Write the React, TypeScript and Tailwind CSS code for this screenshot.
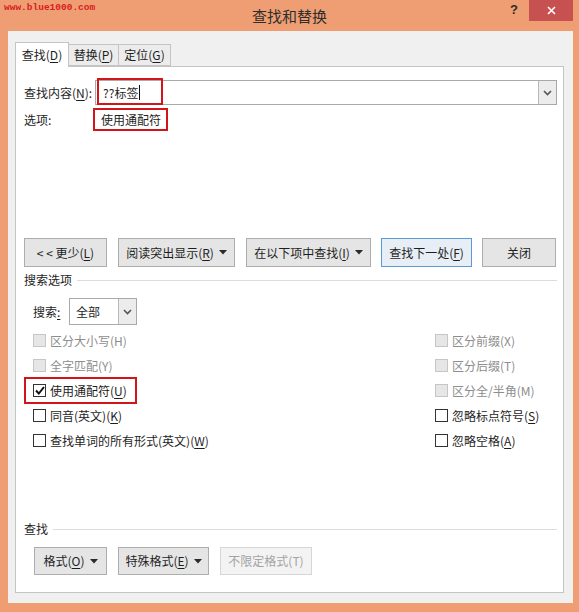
import React from "react";

const U = ({ c }: { c: string }) => (
  <span className="underline decoration-[1px] underline-offset-[2px]">{c}</span>
);

const Caret = () => (
  <svg width="8" height="5" viewBox="0 0 8 5" className="ml-[5px] shrink-0">
    <path d="M0 0 L8 0 L4 4.5 Z" fill="#2a2a2a" />
  </svg>
);

const Chevron = () => (
  <svg width="9" height="6" viewBox="0 0 9 6">
    <path d="M1 1 L4.5 4.5 L8 1" fill="none" stroke="#555" strokeWidth="1.6" />
  </svg>
);

const Btn = ({
  w,
  children,
  focused = false,
  disabled = false,
  h = "h-[29px]",
}: {
  w: string;
  children: React.ReactNode;
  focused?: boolean;
  disabled?: boolean;
  h?: string;
}) => (
  <div
    className={`${w} ${h} flex shrink-0 items-center justify-center border text-[12px] ${
      focused
        ? "border-[#5b9bd5] bg-[#e8eef5] text-[#1e1e1e]"
        : disabled
          ? "border-[#d6d6d6] bg-[#f3f3f3] text-[#a3a3a3]"
          : "border-[#adadad] bg-[#e5e5e5] text-[#1e1e1e]"
    }`}
  >
    {children}
  </div>
);

const Check = ({
  label,
  acc,
  disabled = false,
  checked = false,
}: {
  label: string;
  acc: string;
  disabled?: boolean;
  checked?: boolean;
}) => (
  <div className="flex h-[25px] items-center">
    <div
      className={`flex h-[13px] w-[13px] items-center justify-center border ${
        disabled ? "border-[#c6c6c6] bg-[#e6e6e6]" : "border-[#333] bg-white"
      }`}
    >
      {checked && (
        <svg width="10" height="9" viewBox="0 0 10 9">
          <path d="M1 4.5 L3.8 7.5 L9 1" fill="none" stroke="#111" strokeWidth="2" />
        </svg>
      )}
    </div>
    <span
      className={`ml-[4px] whitespace-nowrap text-[12px] ${
        disabled ? "text-[#8d8d8d]" : "text-[#1e1e1e]"
      }`}
    >
      {label}(
      {disabled ? acc : <U c={acc} />})
    </span>
  </div>
);

const Group = ({ title }: { title: string }) => (
  <div className="flex h-[16px] items-center">
    <span className="whitespace-nowrap text-[12px] text-[#1e1e1e]">{title}</span>
    <div className="ml-[5px] h-px flex-1 bg-[#dcdcdc]" />
  </div>
);

export default function App() {
  return (
    <div className="flex h-[612px] w-[579px] flex-col overflow-hidden bg-[#ef9e73] font-['Noto_Sans_CJK_SC',sans-serif] leading-[16px]">
      {/* title bar */}
      <div className="flex h-[31px] shrink-0 items-start">
        <div className="w-[100px] pl-[4px] pt-[2px] font-['Liberation_Mono',monospace] text-[9.5px] font-bold leading-[12px] text-[#d82020]">
          www.blue1000.com
        </div>
        <div className="flex-1 pt-[6px] text-center text-[15px] leading-[20px] text-[#2e2e2e]">
          查找和替换
        </div>
        <div className="flex w-[100px] items-start justify-end pr-[6px]">
          <span className="mr-[11px] pt-[2px] font-['Liberation_Sans',sans-serif] text-[13px] font-bold leading-[16px] text-[#2e2e2e]">
            ?
          </span>
          <div className="flex h-[21px] w-[44px] items-center justify-center bg-[#c75050]">
            <svg width="9" height="9" viewBox="0 0 9 9">
              <path d="M1 1 L8 8 M8 1 L1 8" stroke="#fff" strokeWidth="1.6" />
            </svg>
          </div>
        </div>
      </div>

      {/* dialog body */}
      <div className="mb-[9px] ml-[8px] mr-[6px] flex flex-1 flex-col bg-[#f0f0f0] pb-[10px] pl-[7px] pr-[9px] pt-[11px]">
        {/* tabs */}
        <div className="flex h-[24px] shrink-0 items-start text-[12px] text-[#1e1e1e]">
          <div className="relative z-10 flex h-[25px] w-[54px] items-center justify-center border border-b-0 border-[#c4c4c4] bg-white">
            查找(<U c="D" />)
          </div>
          <div className="mt-[2px] flex h-[22px] w-[50px] items-center justify-center border border-l-0 border-[#c4c4c4] bg-[#ececec]">
            替换(<U c="P" />)
          </div>
          <div className="mt-[2px] flex h-[22px] w-[52px] items-center justify-center border border-l-0 border-[#c4c4c4] bg-[#ececec]">
            定位(<U c="G" />)
          </div>
        </div>

        {/* panel */}
        <div className="flex h-[527px] flex-col border border-[#c4c4c4] bg-white pl-[8px] pr-[6px] pt-[13px] text-[12px] text-[#1e1e1e]">
          {/* find what */}
          <div className="flex h-[25px] items-center">
            <span className="w-[71px] whitespace-nowrap">
              查找内容(<U c="N" />):
            </span>
            <div className="relative flex h-[25px] flex-1 items-center border border-[#a9a9a9] bg-white">
              <span className="pl-[7px]">??标签</span>
              <span className="ml-px h-[15px] w-px bg-[#111]" />
              <div className="ml-auto flex h-full w-[18px] items-center justify-center border-l border-[#b9b9b9] bg-[#ececec]">
                <Chevron />
              </div>
              <div className="absolute left-[1px] top-[-3px] h-[27px] w-[66px] border-2 border-[#d0161b]" />
            </div>
          </div>

          {/* options */}
          <div className="relative mt-[3px] flex h-[23px] items-center">
            <span className="w-[77px]">选项:</span>
            <span>使用通配符</span>
            <div className="absolute left-[69px] top-0 h-[23px] w-[75px] border-2 border-[#d0161b]" />
          </div>

          {/* buttons */}
          <div className="mt-[107px] flex items-center">
            <Btn w="w-[83px]">
              &lt; &lt; 更少(<U c="L" />)
            </Btn>
            <div className="ml-[11px]">
              <Btn w="w-[117px]">
                阅读突出显示(<U c="R" />)
                <Caret />
              </Btn>
            </div>
            <div className="ml-[11px]">
              <Btn w="w-[125px]">
                在以下项中查找(<U c="I" />)
                <Caret />
              </Btn>
            </div>
            <div className="ml-[10px]">
              <Btn w="w-[91px]" focused>
                查找下一处(<U c="F" />)
              </Btn>
            </div>
            <div className="ml-[10px]">
              <Btn w="w-[74px]">关闭</Btn>
            </div>
          </div>

          <div className="mt-[5px]">
            <Group title="搜索选项" />
          </div>

          {/* search direction */}
          <div className="mt-[10px] flex items-center pl-[9px]">
            <span className="w-[36px]">
              搜索<span className="underline underline-offset-[2px]">:</span>
            </span>
            <div className="flex h-[27px] w-[68px] items-center border border-[#a9a9a9] bg-white">
              <span className="pl-[6px]">全部</span>
              <div className="ml-auto flex h-full w-[18px] items-center justify-center border-l border-[#b9b9b9] bg-[#ececec]">
                <Chevron />
              </div>
            </div>
          </div>

          {/* checkboxes */}
          <div className="mt-[3px] flex justify-between pl-[9px]">
            <div className="flex flex-col">
              <Check label="区分大小写" acc="H" disabled />
              <Check label="全字匹配" acc="Y" disabled />
              <div className="relative">
                <Check label="使用通配符" acc="U" checked />
                <div className="absolute left-[-9px] top-[-1px] h-[27px] w-[113px] border-2 border-[#d0161b]" />
              </div>
              <Check label="同音(英文)" acc="K" />
              <Check label="查找单词的所有形式(英文)" acc="W" />
            </div>
            <div className="flex w-[122px] flex-col">
              <Check label="区分前缀" acc="X" disabled />
              <Check label="区分后缀" acc="T" disabled />
              <Check label="区分全/半角" acc="M" disabled />
              <Check label="忽略标点符号" acc="S" />
              <Check label="忽略空格" acc="A" />
            </div>
          </div>

          <div className="mt-[68px]">
            <Group title="查找" />
          </div>

          {/* format buttons */}
          <div className="mt-[10px] flex items-center pl-[10px]">
            <Btn w="w-[73px]" h="h-[28px]">
              格式(<U c="O" />)
              <Caret />
            </Btn>
            <div className="ml-[11px]">
              <Btn w="w-[91px]" h="h-[28px]">
                特殊格式(<U c="E" />)
                <Caret />
              </Btn>
            </div>
            <div className="ml-[11px]">
              <Btn w="w-[92px]" h="h-[28px]" disabled>
                不限定格式(T)
              </Btn>
            </div>
          </div>
        </div>
      </div>
    </div>
  );
}
